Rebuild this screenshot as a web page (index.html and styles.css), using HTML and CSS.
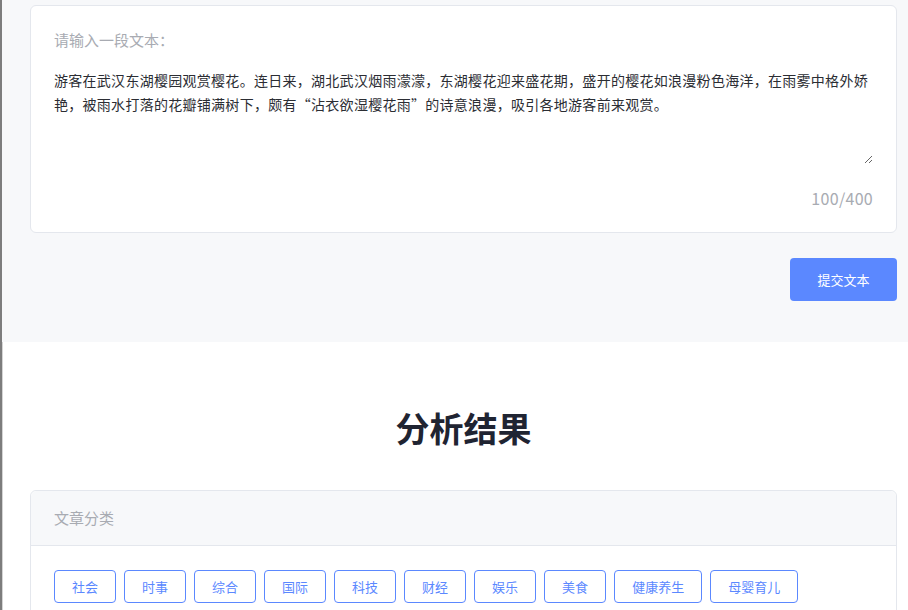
FILE: index.html
```html
<!DOCTYPE html>
<html lang="zh-CN">
<head>
    <meta charset="UTF-8">
    <meta name="viewport" content="width=device-width, initial-scale=1.0">
    <title>文本分析</title>
    <link rel="stylesheet" href="styles.css">
</head>
<body>
    <div class="page">
        <section class="input-section">
            <div class="card input-card">
                <label class="input-label" for="content">请输入一段文本：</label>
                <textarea id="content" class="input-text" maxlength="400">游客在武汉东湖樱园观赏樱花。连日来，湖北武汉烟雨濛濛，东湖樱花迎来盛花期，盛开的樱花如浪漫粉色海洋，在雨雾中格外娇艳，被雨水打落的花瓣铺满树下，颇有“沾衣欲湿樱花雨”的诗意浪漫，吸引各地游客前来观赏。</textarea>
                <div class="word-count"><span id="count">100</span>/400</div>
            </div>
            <div class="actions">
                <button class="submit-btn" id="submit">提交文本</button>
            </div>
        </section>

        <section class="result-section">
            <h1 class="result-title">分析结果</h1>
            <div class="card result-card">
                <div class="result-header">文章分类</div>
                <div class="result-body">
                    <div class="tags">
                        <span class="tag">社会</span>
                        <span class="tag">时事</span>
                        <span class="tag">综合</span>
                        <span class="tag">国际</span>
                        <span class="tag">科技</span>
                        <span class="tag">财经</span>
                        <span class="tag">娱乐</span>
                        <span class="tag">美食</span>
                        <span class="tag">健康养生</span>
                        <span class="tag">母婴育儿</span>
                    </div>
                </div>
            </div>
        </section>
    </div>
</body>
</html>
```

FILE: styles.css
```css
body {
    margin: 0;
    padding: 0;
    font-family: "Noto Sans CJK SC", "Noto Sans", sans-serif;
    background: #fff;
    color: #303133;
}
.page {
    border-left: 2px solid #7d7d7d;
    box-shadow: inset 1px 0 0 #d4d4d4;
    min-height: 610px;
}
.card {
    background: #fff;
    border: 1px solid #e4e7ed;
    border-radius: 6px;
}

/* input area */
.input-section {
    background: #f7f8fa;
    padding: 5px 11px 41px 28px;
}
.input-card {
    padding: 24px 23px 23px 23px;
    display: flex;
    flex-direction: column;
}
.input-label {
    font-size: 15px;
    line-height: 20px;
    color: #a8abb2;
    margin-bottom: 18px;
}
.input-text {
    border: none;
    outline: none;
    padding: 0;
    margin: 0;
    height: 96px;
    resize: vertical;
    font-family: inherit;
    font-size: 14px;
    letter-spacing: 0.28px;
    line-height: 24px;
    color: #2b2d33;
    background: transparent;
}
.word-count {
    margin-top: 23px;
    text-align: right;
    font-size: 16px;
    line-height: 22px;
    letter-spacing: 0.3px;
    color: #a8abb2;
}
.actions {
    display: flex;
    justify-content: flex-end;
    margin-top: 25px;
}
.submit-btn {
    width: 107px;
    height: 43px;
    border: none;
    border-radius: 4px;
    background: #5b88ff;
    color: #fff;
    font-family: inherit;
    font-size: 13px;
    cursor: pointer;
}
.submit-btn:hover {
    background: #7a9fff;
}

/* results */
.result-section {
    padding: 62px 11px 0 28px;
}
.result-title {
    margin: 0 0 38px;
    text-align: center;
    font-size: 34px;
    line-height: 48px;
    font-weight: 700;
    color: #1f2432;
}
.result-header {
    background: #f7f8fa;
    border-bottom: 1px solid #e4e7ed;
    border-radius: 6px 6px 0 0;
    padding: 17px 23px;
    font-size: 15px;
    line-height: 20px;
    color: #a8abb2;
}
.result-body {
    padding: 24px 23px;
}
.tags {
    display: flex;
    flex-wrap: wrap;
    gap: 8px;
}
.tag {
    display: inline-block;
    height: 31px;
    line-height: 31px;
    padding: 0 17px;
    border: 1px solid #5b88ff;
    border-radius: 4px;
    color: #5b88ff;
    font-size: 13px;
}
```
